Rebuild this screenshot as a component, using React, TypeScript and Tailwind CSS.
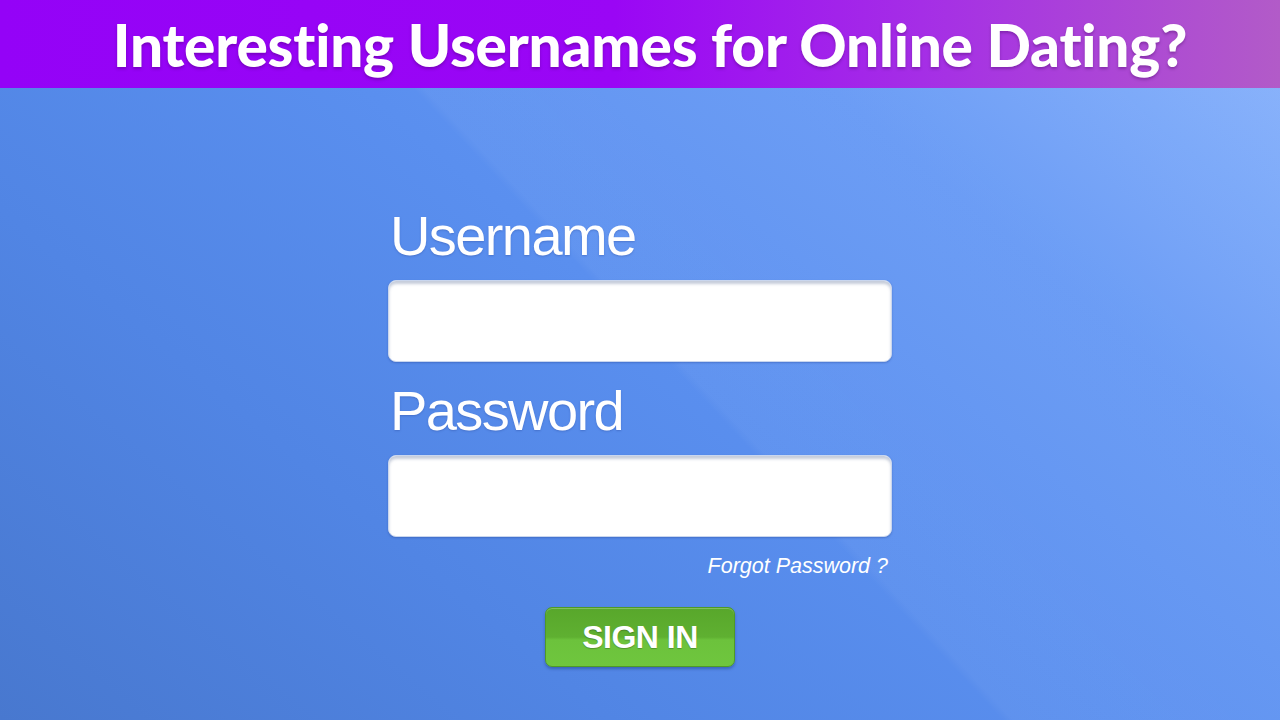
import React from "react";

const SANS = "font-['Liberation_Sans',Arial,sans-serif]";

function Field({ label }: { label: string }) {
  return (
    <div className="flex flex-col">
      <label
        className={`${SANS} pl-[2px] text-[56px] leading-[56px] tracking-[-1.6px] text-white [text-shadow:0_1px_2px_rgba(40,70,150,0.35)]`}
      >
        {label}
      </label>
      <input
        type="text"
        className="mt-[16px] h-[82px] w-full rounded-[8px] border border-[#c9d6ee] bg-white shadow-[inset_0_3px_3px_rgba(90,110,150,0.35),0_1px_2px_rgba(30,60,140,0.35)] outline-none"
      />
    </div>
  );
}

export default function App() {
  return (
    <div className="flex h-[720px] w-[1280px] flex-col overflow-hidden">
      <header className="flex h-[88px] shrink-0 items-center justify-center bg-[linear-gradient(90deg,#9402f7_0%,#9a06f5_48%,#a52ee6_72%,#b25bc8_100%)] pl-[20px]">
        <h1 className="font-['Lato',sans-serif] text-[58.5px] font-black leading-none tracking-[-0.2px] text-white [text-shadow:0_2px_3px_rgba(60,0,90,0.35)]">
          Interesting Usernames for Online Dating?
        </h1>
      </header>

      {/* soft diagonal sheen over the blue backdrop */}
      <main className="flex flex-1 flex-col items-center bg-[linear-gradient(47deg,rgba(255,255,255,0)_0%,rgba(255,255,255,0)_53.6%,rgba(255,255,255,0.045)_54.2%,rgba(255,255,255,0.03)_100%),linear-gradient(40deg,#4878cf_0%,#5185e4_30%,#5a8fef_55%,#6699f5_78%,#84affb_100%)] pt-[120px]">
        <form className="flex w-[504px] flex-col" onSubmit={(e) => e.preventDefault()}>
          <Field label="Username" />
          <div className="mt-[21px]">
            <Field label="Password" />
          </div>
          <a
            href="#"
            className={`${SANS} mt-[17px] self-end pr-[4px] text-[21.5px] italic leading-[24px] text-white`}
          >
            Forgot Password ?
          </a>
          <button
            type="submit"
            className={`${SANS} mt-[29px] h-[60px] w-[190px] self-center rounded-[7px] border border-[#4f9a26] bg-[linear-gradient(180deg,#58a72b_0%,#5fb031_50%,#6cc23c_55%,#6fc63e_100%)] text-[32px] font-bold tracking-[-0.5px] text-white shadow-[0_2px_3px_rgba(20,50,120,0.4),inset_0_1px_0_rgba(255,255,255,0.25)] [text-shadow:0_1px_1px_rgba(0,0,0,0.25)]`}
          >
            SIGN IN
          </button>
        </form>
      </main>
    </div>
  );
}
